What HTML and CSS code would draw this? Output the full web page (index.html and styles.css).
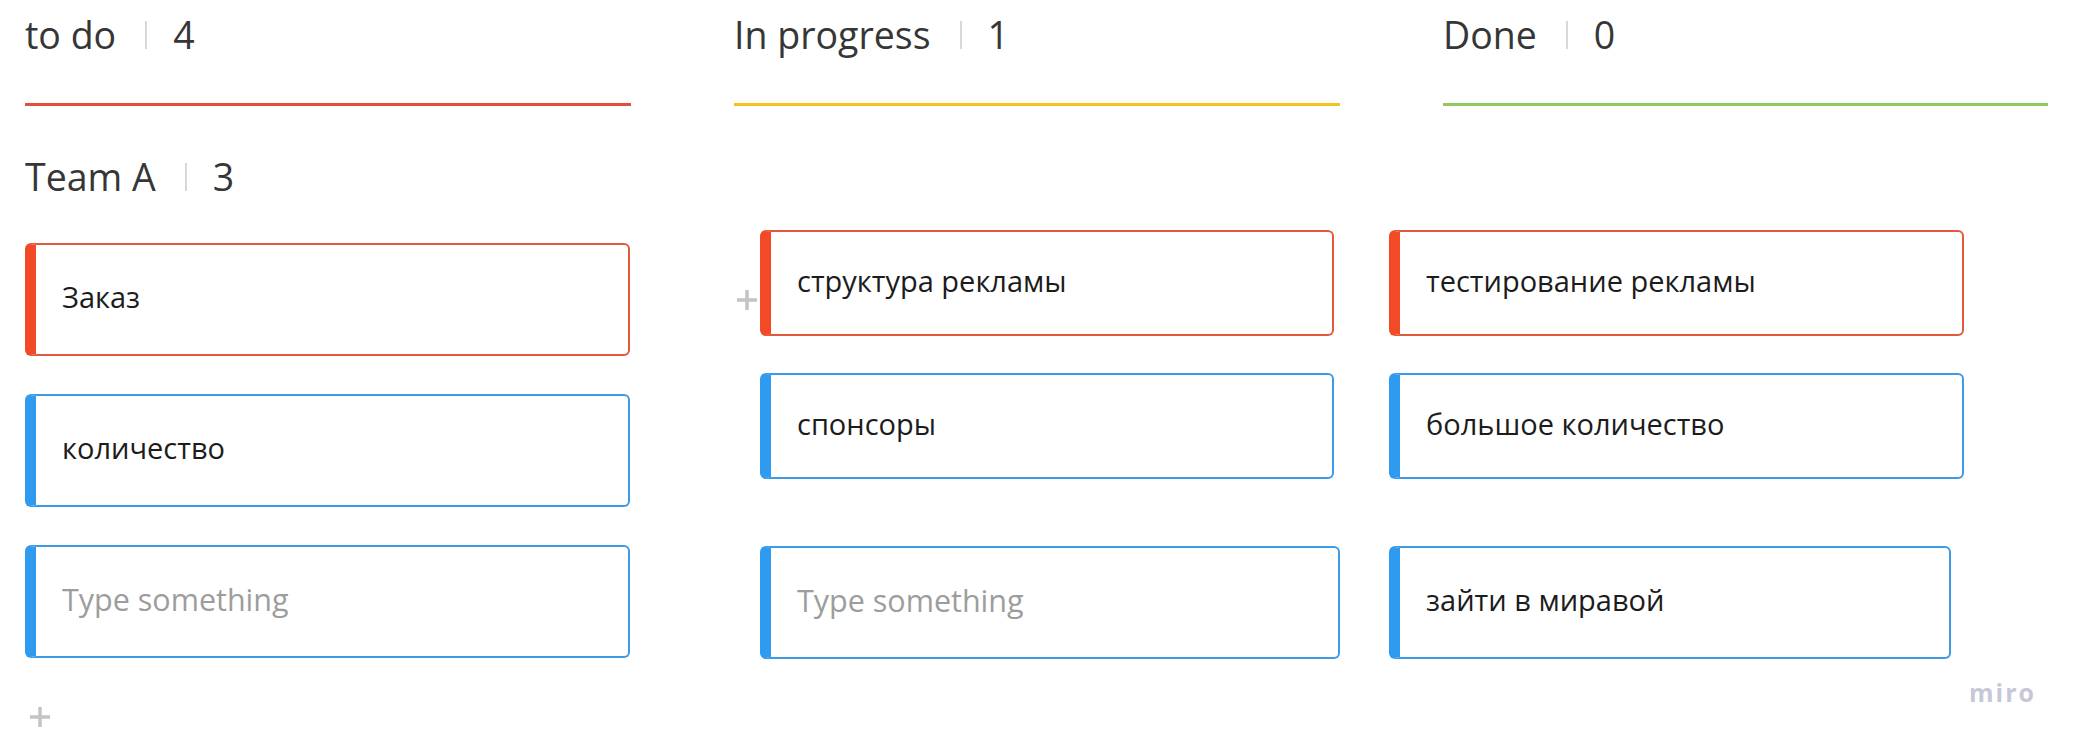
FILE: index.html
```html
<!DOCTYPE html>
<html lang="ru">
<head>
<meta charset="utf-8">
<title>Board</title>
<link rel="stylesheet" href="styles.css">
</head>
<body>
<div class="board">
  <div class="heads">
    <div class="head head--todo">
      <div class="title"><span class="name">to do</span><span class="sep"></span><span class="count">4</span></div>
      <div class="rule"></div>
    </div>
    <div class="head head--progress">
      <div class="title"><span class="name">In progress</span><span class="sep"></span><span class="count">1</span></div>
      <div class="rule"></div>
    </div>
    <div class="head head--done">
      <div class="title"><span class="name">Done</span><span class="sep"></span><span class="count">0</span></div>
      <div class="rule"></div>
    </div>
  </div>

  <div class="lane-title title"><span class="name">Team A</span><span class="sep"></span><span class="count">3</span></div>

  <div class="lane">
    <div class="col col--todo">
      <div class="card card--red">Заказ</div>
      <div class="card card--blue">количество</div>
      <div class="card card--blue card--empty">Type something</div>
      <div class="add add--bottom">
        <svg viewBox="0 0 22 22" width="22" height="22"><path d="M11 1v20M1 11h20" stroke="#c4c4c4" stroke-width="3.5" fill="none"/></svg>
      </div>
    </div>
    <div class="col col--progress">
      <div class="card card--red card--short card--w574">структура рекламы
        <div class="add add--side">
          <svg viewBox="0 0 22 22" width="22" height="22"><path d="M11 1v20M1 11h20" stroke="#c4c4c4" stroke-width="3.5" fill="none"/></svg>
        </div>
      </div>
      <div class="card card--blue card--short card--w574">спонсоры</div>
      <div class="card card--blue card--empty card--w580 card--far">Type something</div>
    </div>
    <div class="col col--done">
      <div class="card card--red card--short card--w575">тестирование рекламы</div>
      <div class="card card--blue card--short card--w575">большое количество</div>
      <div class="card card--blue card--w562 card--far">зайти в миравой</div>
    </div>
  </div>

  <div class="logo">miro</div>
</div>
</body>
</html>
```

FILE: styles.css
```css
* { box-sizing: border-box; }

html, body {
  margin: 0;
  padding: 0;
  background: #ffffff;
}

body {
  font-family: "Open Sans", "Noto Sans", "Liberation Sans", sans-serif;
  color: #333333;
  width: 2084px;
  height: 749px;
  overflow: hidden;
}

.board {
  position: relative;
  width: 2084px;
  height: 749px;
  padding: 11px 0 0 25px;
}

.heads {
  display: grid;
  grid-template-columns: 606px 606px 605px;
  column-gap: 103px;
}

.title {
  display: flex;
  align-items: center;
  height: 48px;
  font-size: 37.5px;
  font-weight: 400;
  line-height: 48px;
  color: #363636;
  white-space: nowrap;
}

.sep {
  width: 2px;
  height: 28px;
  margin: 0 26px 0 29px;
  background: #d8d8d8;
}

.rule {
  height: 3px;
  margin-top: 44px;
}

.head--todo .rule { background: #e3503a; }
.head--progress .rule { background: #f3c41f; }
.head--done .rule { background: #93c85c; }

.lane-title {
  margin-top: 47px;
}

.lane {
  display: flex;
  align-items: flex-start;
  margin-top: 29px;
}

.col {
  display: flex;
  flex-direction: column;
  gap: 37px;
}

.col--todo {
  width: 605px;
  padding-top: 13px;
  gap: 38px;
}

.col--progress {
  width: 580px;
  margin-left: 130px;
}

.col--done {
  width: 575px;
  margin-left: 49px;
}

.card {
  position: relative;
  display: flex;
  align-items: center;
  height: 113px;
  padding-left: 26px;
  padding-bottom: 6px;
  border: 2px solid;
  border-left-width: 11px;
  border-radius: 6px;
  font-size: 29px;
  font-weight: 400;
  color: #1c1c1c;
  background: #ffffff;
  white-space: nowrap;
}

.card--red {
  border-color: #e2593e;
  border-left-color: #f24a26;
}

.card--blue {
  border-color: #3d9ae6;
  border-left-color: #2f9bf0;
}

.card--empty {
  color: #9d9d9d;
  font-size: 30.5px;
}

.card--short { height: 106px; }
.card--far { margin-top: 30px; }

.card--w574 { width: 574px; }
.card--w580 { width: 580px; }
.card--w575 { width: 575px; }
.card--w562 { width: 562px; }

.add {
  width: 22px;
  height: 22px;
  line-height: 0;
}

.add--bottom {
  margin: 10px 0 0 4px;
}

.add--side {
  position: absolute;
  left: -35px;
  top: 57px;
}

.logo {
  position: absolute;
  right: 48px;
  bottom: 44px;
  font-size: 25px;
  font-weight: 700;
  line-height: 26px;
  letter-spacing: 2px;
  color: #c7c8d7;
}
```
